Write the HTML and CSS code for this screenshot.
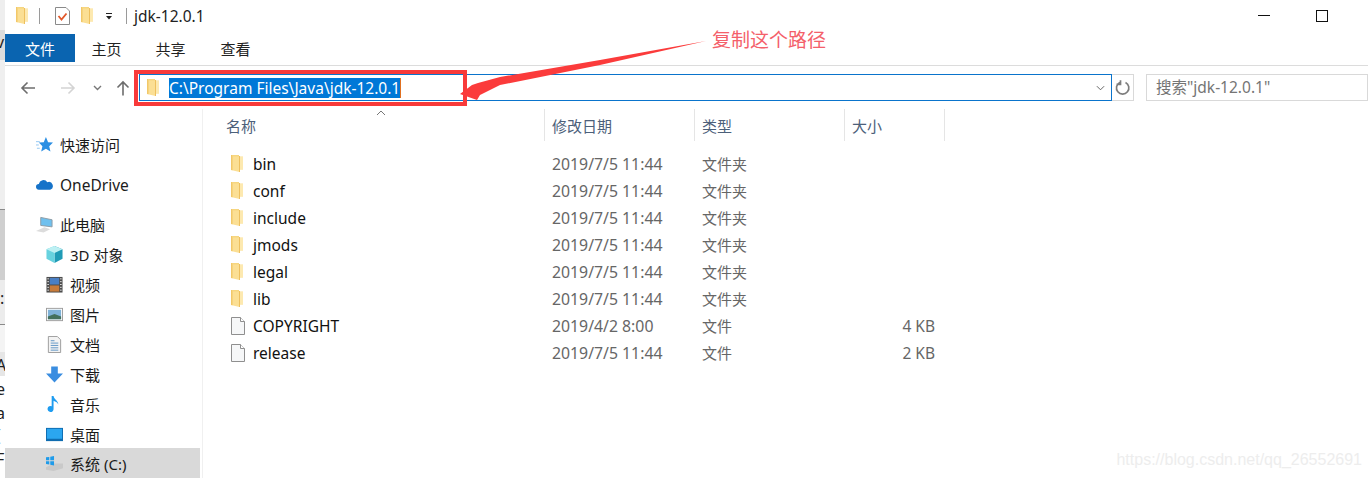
FILE: index.html
```html
<!DOCTYPE html>
<html lang="zh">
<head>
<meta charset="utf-8">
<title>jdk-12.0.1</title>
<link rel="stylesheet" href="styles.css">
</head>
<body>
<svg class="defs" width="0" height="0">
  <symbol id="folder" viewBox="0 0 12 17">
    <path d="M0 0 H8 V1.500 H12 V14.500 H8.500 V17 L0 15 Z" fill="#fbdf94"/>
    <path d="M8.500 2 H12 V14.500 H8.500 Z" fill="#fde9b0"/>
    <path d="M0 0 H1.500 V15.300 L0 15 Z" fill="#f2c869"/>
    <path d="M1.500 0 H8 V1.500 H1.500 Z" fill="#f6d680"/>
    <path d="M8 1 H9 V17 H8 Z" fill="#eec05f"/>
  </symbol>
  <symbol id="file" viewBox="0 0 14 18">
    <path d="M.5 .5 H9.500 L13.500 4.500 V17.500 H.5 Z" fill="#f6f7f8" stroke="#8f8f8f"/>
    <path d="M9.500 .5 V4.500 H13.500" fill="#fff" stroke="#8f8f8f"/>
  </symbol>
</svg>

<div class="app">
  <div class="backdrop">
    <span class="frag f6">v</span>
    <span class="frag f7">:</span>
    <span class="frag f1">A</span>
    <span class="frag f2">e</span>
    <span class="frag f3">a</span>
    <span class="frag f4">(</span>
    <span class="frag f5">F</span>
  </div>

  <main class="window">
    <header class="titlebar">
      <svg class="qa-folder"><use href="#folder"/></svg>
      <span class="vsep"></span>
      <svg class="qa-check" viewBox="0 0 15 18">
        <path d="M.5 .5 H11 L14.500 4 V17.500 H.5 Z" fill="#fff" stroke="#8a8a8a"/>
        <path d="M3.500 9 L6.500 12.500 L11.500 6.500" fill="none" stroke="#e2582a" stroke-width="1.800"/>
      </svg>
      <svg class="qa-folder second"><use href="#folder"/></svg>
      <svg class="qa-drop" viewBox="0 0 8 7"><path d="M1 .5 H7" stroke="#222" fill="none"/><path d="M1 3 H7 L4 6.500 Z" fill="#222"/></svg>
      <span class="vsep two"></span>
      <span class="title">jdk-12.0.1</span>
      <div class="winctl">
        <svg class="min" viewBox="0 0 12 1"><rect width="12" height="1" fill="#111"/></svg>
        <svg class="max" viewBox="0 0 12 12"><rect x=".5" y=".5" width="11" height="11" fill="none" stroke="#111"/></svg>
      </div>
    </header>

    <nav class="tabs">
      <span class="tab active">文件</span>
      <span class="tab">主页</span>
      <span class="tab">共享</span>
      <span class="tab">查看</span>
    </nav>

    <div class="addressrow">
      <svg class="nav back" viewBox="0 0 16 14"><path d="M15 7 H2 M7.500 1.500 L2 7 L7.500 12.500" fill="none" stroke="#6d6d6d" stroke-width="1.600"/></svg>
      <svg class="nav fwd" viewBox="0 0 16 14"><path d="M1 7 H14 M8.500 1.500 L14 7 L8.500 12.500" fill="none" stroke="#d4d4d4" stroke-width="1.600"/></svg>
      <svg class="nav-down" viewBox="0 0 9 6"><path d="M1 1 L4.500 4.500 L8 1" fill="none" stroke="#777" stroke-width="1.400"/></svg>
      <svg class="nav up" viewBox="0 0 14 16"><path d="M7 15.500 V2 M1.500 7.500 L7 2 L12.500 7.500" fill="none" stroke="#6d6d6d" stroke-width="1.600"/></svg>
      <div class="addressbox">
        <svg class="addr-folder"><use href="#folder"/></svg>
        <span class="path">C:\Program Files\Java\jdk-12.0.1</span>
        <svg class="addr-drop" viewBox="0 0 10 6"><path d="M1 1 L5 5 L9 1" fill="none" stroke="#555"/></svg>
      </div>
      <div class="refresh">
        <svg viewBox="0 0 16 16"><path d="M10.500 2.400 A6.200 6.200 0 1 1 4.800 2.400 M5.500 .2 V4.400 H1.500" fill="none" stroke="#7d7d7d" stroke-width="1.700"/></svg>
      </div>
      <div class="search">搜索"jdk-12.0.1"</div>
    </div>

    <div class="content">
      <aside class="sidebar">
        <div class="side-item top"><svg class="side-ico" viewBox="0 0 18 18"><path d="M10.500 1 L12.800 6.600 L18 7 L14 10.800 L15.300 16.500 L10.500 13.500 L5.500 16.500 L6.800 10.800 L3 7 L8.200 6.600 Z" fill="#2b8fe3"/><path d="M0 6 H4 M0 9.500 H3 M1 13 H4" stroke="#8fc6f2"/></svg>快速访问</div>
        <div class="side-item drive"><svg class="side-ico" viewBox="0 0 18 12"><path d="M3 11.500 A3 3 0 0 1 3 5.500 A5 5 0 0 1 12 3.500 A4 4 0 0 1 15 11.500 Z" fill="#1673c9"/></svg><span class="latin">OneDrive</span></div>
        <div class="side-item pc"><svg class="side-ico" viewBox="0 0 18 18"><path d="M5 1.500 L17 4 V11.500 L5 10 Z" fill="#6fc0ee" stroke="#8b9aa5"/><path d="M0 16 L9 12 L15 14 L8 17.500 Z" fill="#dcdcdc"/></svg>此电脑</div>
        <div class="side-item sub"><svg class="side-ico" viewBox="0 0 18 18"><path d="M9 0 L17.500 3.500 V13.500 L9 18 Z" fill="#1f9bb6"/><path d="M9 0 L.5 3.500 V13.500 L9 18 Z" fill="#67d2df"/><path d="M.5 3.500 L9 0 L17.500 3.500 L9 7.500 Z" fill="#bdf0f3"/></svg>3D 对象</div>
        <div class="side-item sub"><svg class="side-ico" viewBox="0 0 18 18"><rect x=".5" y="1" width="17" height="16.500" fill="#4c4c4c"/><rect x="4" y="2" width="10" height="7" fill="#4a7fc4"/><rect x="4" y="10" width="10" height="6.500" fill="#c87b3a"/><path d="M1.500 3 H3 M1.500 6 H3 M1.500 9 H3 M1.500 12 H3 M1.500 15 H3 M15 3 H16.500 M15 6 H16.500 M15 9 H16.500 M15 12 H16.500 M15 15 H16.500" stroke="#fff"/></svg>视频</div>
        <div class="side-item sub"><svg class="side-ico" viewBox="0 0 18 14"><rect x=".5" y=".5" width="17" height="13" fill="#fff" stroke="#9c9c9c"/><rect x="2" y="2" width="14" height="10" fill="#7fb2d8"/><path d="M2 9 L9 6.500 L16 9 V12 H2 Z" fill="#43705c"/></svg>图片</div>
        <div class="side-item sub"><svg class="side-ico" viewBox="0 0 14 18"><path d="M.5 .5 H10 L13.500 4 V17.500 H.5 Z" fill="#f3f3f3" stroke="#9a9a9a"/><path d="M3 5 H7 M3 7.500 H11 M3 10 H11 M3 12.500 H11 M3 15 H11" stroke="#5c93c4"/></svg>文档</div>
        <div class="side-item sub"><svg class="side-ico" viewBox="0 0 18 17"><path d="M5.500 0 H12.500 V7.500 H18 L9 17 L0 7.500 H5.500 Z" fill="#3a8de0"/></svg>下载</div>
        <div class="side-item sub"><svg class="side-ico" viewBox="0 0 14 18"><path d="M6 1 V13.500 A3.200 3.200 0 1 1 4 10.800 V0 H6 C6.500 4 11 4.500 11 9 C10 6.500 8 6 6 5 Z" fill="#1e9cf0"/></svg>音乐</div>
        <div class="side-item sub"><svg class="side-ico" viewBox="0 0 18 14"><rect width="18" height="14" fill="#0f6cb0"/><rect x="1" y="1" width="16" height="10.500" fill="#2ba6f0"/></svg>桌面</div>
        <div class="side-item sub selected"><svg class="side-ico" viewBox="0 0 18 16"><path d="M0 12 L8 8 H18 V13 L8 16 L0 14.500 Z" fill="#c9c9c9"/><path d="M0 1.500 L3.500 1 V4.500 H0 Z M4.500 .8 L8.500 0 V4.500 H4.500 Z M0 5.500 H3.500 V9 L0 8.500 Z M4.500 5.500 H8.500 V10 L4.500 9.200 Z" fill="#1e9bea"/></svg>系统 (C:)</div>
      </aside>

      <section class="files">
        <div class="colhead">
          <span class="hc name">名称<svg class="sort" viewBox="0 0 10 6"><path d="M1 5 L5 1 L9 5" fill="none" stroke="#777"/></svg></span>
          <span class="hc date">修改日期</span>
          <span class="hc type">类型</span>
          <span class="hc size">大小</span>
        </div>
        <div class="row"><span class="c-name"><svg class="ficon"><use href="#folder"/></svg>bin</span><span class="c-date">2019/7/5 11:44</span><span class="c-type">文件夹</span><span class="c-size"></span></div>
        <div class="row"><span class="c-name"><svg class="ficon"><use href="#folder"/></svg>conf</span><span class="c-date">2019/7/5 11:44</span><span class="c-type">文件夹</span><span class="c-size"></span></div>
        <div class="row"><span class="c-name"><svg class="ficon"><use href="#folder"/></svg>include</span><span class="c-date">2019/7/5 11:44</span><span class="c-type">文件夹</span><span class="c-size"></span></div>
        <div class="row"><span class="c-name"><svg class="ficon"><use href="#folder"/></svg>jmods</span><span class="c-date">2019/7/5 11:44</span><span class="c-type">文件夹</span><span class="c-size"></span></div>
        <div class="row"><span class="c-name"><svg class="ficon"><use href="#folder"/></svg>legal</span><span class="c-date">2019/7/5 11:44</span><span class="c-type">文件夹</span><span class="c-size"></span></div>
        <div class="row"><span class="c-name"><svg class="ficon"><use href="#folder"/></svg>lib</span><span class="c-date">2019/7/5 11:44</span><span class="c-type">文件夹</span><span class="c-size"></span></div>
        <div class="row"><span class="c-name"><svg class="ficon doc"><use href="#file"/></svg>COPYRIGHT</span><span class="c-date">2019/4/2 8:00</span><span class="c-type">文件</span><span class="c-size">4 KB</span></div>
        <div class="row"><span class="c-name"><svg class="ficon doc"><use href="#file"/></svg>release</span><span class="c-date">2019/7/5 11:44</span><span class="c-type">文件</span><span class="c-size">2 KB</span></div>
      </section>
    </div>
  </main>

  <div class="redbox"></div>
  <svg class="arrow" viewBox="0 0 1368 478"><path d="M706 41 L600 60 L500 77 L478 83 L472 85 L460 94 L477 100 L480 95 L500 85 L600 65 Z" fill="#fb3b3b"/></svg>
  <span class="callout">复制这个路径</span>
  <span class="watermark">https://blog.csdn.net/qq_26552691</span>
</div>
</body>
</html>
```

FILE: styles.css
```css
* { box-sizing: border-box; }
html, body { margin: 0; padding: 0; height: 478px; overflow: hidden; background: #fff; }
body { font-family: "Noto Sans", "Noto Sans CJK SC", sans-serif; font-size: 15px; color: #1b1b1b; }
.defs { position: absolute; }

.app { position: relative; display: flex; width: 1368px; height: 478px; overflow: hidden; }
.backdrop {
  position: relative; width: 5px; flex: none; overflow: hidden;
  background: linear-gradient(to bottom,
    #eeeeee 0 30px, #dcdcdc 30px 60px, #efefef 60px 209px, #8a8a8a 209px 210px,
    #cfcfcf 210px 280px, #ececec 280px 324px, #8a8a8a 324px 325px, #f4f4f4 325px 352px,
    #e6e6e6 352px 376px, #ffffff 376px 478px);
}
.frag { position: absolute; left: -4px; font-size: 16px; line-height: 20px; color: #222; }
.f6 { top: 32px; } .f7 { top: 288px; left: 0; }
.f1 { top: 355px; } .f2 { top: 379px; } .f3 { top: 403px; } .f4 { top: 425px; } .f5 { top: 449px; }

.window { flex: 1; min-width: 0; display: flex; flex-direction: column; background: #fff; }

.titlebar { height: 34px; padding-bottom: 3px; display: flex; align-items: center; }
.qa-folder { width: 12px; height: 17px; margin-left: 11px; flex: none; }
.qa-folder.second { margin-left: 11px; }
.vsep { width: 1px; height: 16px; background: #9a9a9a; margin-left: 11px; }
.vsep.two { margin-left: 13px; }
.qa-check { width: 15px; height: 18px; margin-left: 15px; }
.qa-drop { width: 8px; height: 7px; margin-left: 12px; margin-top: 2px; }
.title { margin-left: 7px; font-size: 15.500px; color: #222; }
.winctl { margin-left: auto; display: flex; align-items: center; gap: 46px; padding-right: 40px; }
.min { width: 12px; height: 1px; margin-top: -1px; }
.max { width: 12px; height: 12px; }

.tabs { height: 28px; display: flex; }
.tab { width: 65px; display: flex; align-items: center; justify-content: center; font-size: 15px; color: #222; }
.tab.active { width: 70px; background: #0a64b0; color: #fff; }
.tabs .tab:nth-child(2) { width: 63px; }

.addressrow { height: 44px; margin-top: 3px; border-top: 1px solid #dcdcdc; display: flex; align-items: center; flex: none; }
.nav { flex: none; }
.back { width: 16px; height: 14px; margin-left: 15px; }
.fwd { width: 16px; height: 14px; margin-left: 24px; }
.nav-down { width: 9px; height: 6px; margin-left: 17px; }
.up { width: 14px; height: 16px; margin-left: 14px; }
.addressbox { width: 973px; height: 27px; margin-left: 9px; border: 1px solid #0a74cc; display: flex; align-items: center; }
.addr-folder { width: 12px; height: 17px; margin-left: 7px; flex: none; }
.path { margin-left: 10px; background: #0078d7; color: #fff; line-height: 20px; font-size: 15.500px; white-space: nowrap; border-right: 1px solid #e07020; }
.addr-drop { width: 9px; height: 6px; margin-left: auto; margin-right: 6px; }
.refresh { width: 22px; height: 27px; border: 1px solid #d9d9d9; border-left: 0; display: flex; align-items: center; justify-content: center; }
.refresh svg { width: 16px; height: 16px; }
.search { flex: 1; height: 27px; margin-left: 12px; border: 1px solid #d9d9d9; padding-left: 9px; line-height: 25px; color: #757575; font-size: 15.500px; white-space: nowrap; }

.content { flex: 1; min-height: 0; display: flex; }
.sidebar { width: 197px; flex: none; padding-top: 20px; }
.side-item { height: 30px; display: flex; align-items: center; white-space: nowrap; padding-left: 55px; position: relative; color: #1b1b1b; }
.latin { font-size: 15.500px; margin-top: 1px; }
.side-item.drive { margin-top: 10px; }
.side-item.pc { margin-top: 10px; }
.side-item.sub { padding-left: 65px; }
.side-ico { position: absolute; left: 31px; top: 7px; width: 17px; height: 17px; }
.side-item.sub .side-ico { left: 41px; }
.side-item.selected { background: #d9d9d9; width: 195px; margin-top: -1px; }

.files { flex: 1; min-width: 0; border-left: 1px solid #f0f0f0; padding-left: 15px; }
.colhead { display: grid; grid-template-columns: 327px 150px 150px 100px; height: 32px; margin-bottom: 9px; }
.hc { position: relative; display: flex; align-items: center; padding-left: 7px; color: #4c607a; font-size: 15px; border-right: 1px solid #e5e5e5; }
.hc.name { padding-left: 8px; }
.sort { position: absolute; left: 158px; top: 1px; width: 10px; height: 6px; }
.row { display: grid; grid-template-columns: 327px 150px 150px 100px; height: 27px; align-items: center; }
.c-name { display: flex; align-items: center; padding-left: 12px; color: #111; font-size: 15.500px; }
.ficon { width: 12px; height: 17px; margin-left: 1px; margin-right: 10px; flex: none; }
.ficon.doc { width: 14px; height: 18px; margin-right: 8px; }
.c-date, .c-type { padding-left: 7px; color: #666; }
.c-date { font-size: 15.800px; }
.c-size { text-align: right; padding-right: 10px; color: #666; font-size: 15.500px; }

.redbox { position: absolute; left: 134px; top: 70px; width: 333px; height: 36px; border: 4px solid #f83a3a; }
.arrow { position: absolute; left: 0; top: 0; width: 1368px; height: 478px; pointer-events: none; }
.callout { position: absolute; left: 712px; top: 25px; font-size: 19px; color: #f4606a; }
.watermark { position: absolute; right: 6px; top: 451px; font-family: "Liberation Sans", sans-serif; font-size: 16px; color: #ededed; }
```
